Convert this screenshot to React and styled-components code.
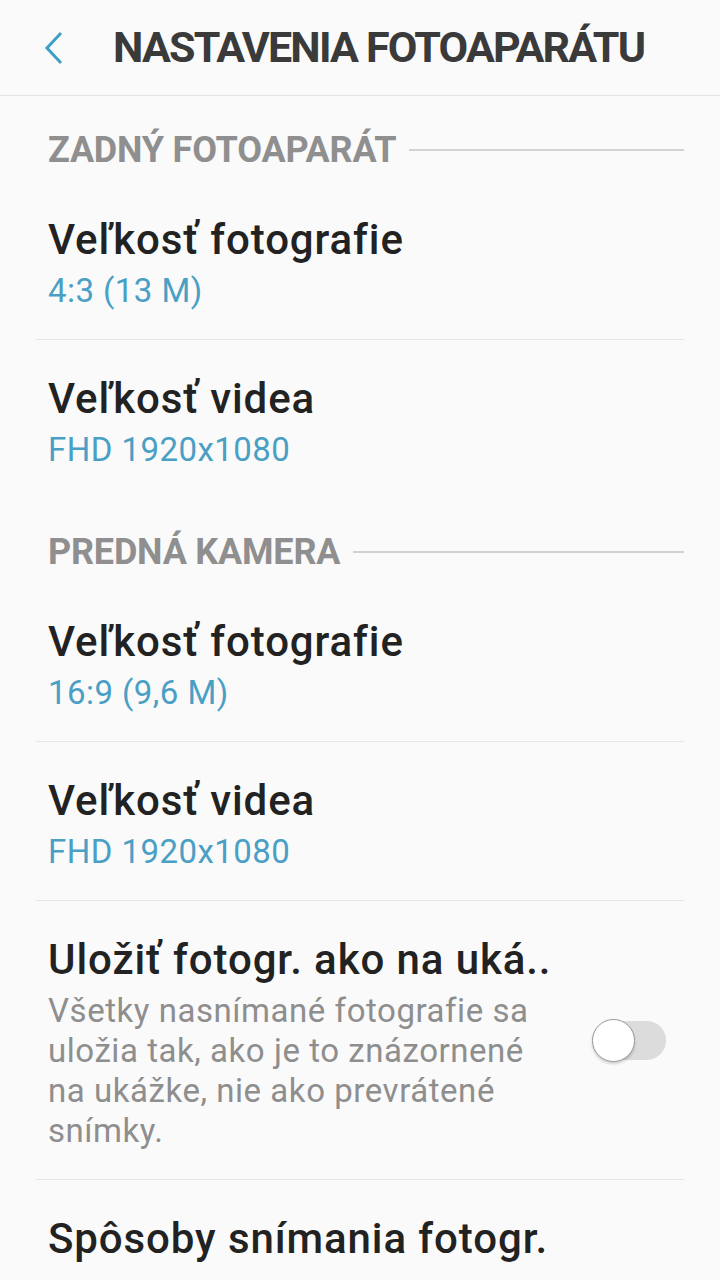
import React from "react";
import styled, { createGlobalStyle } from "styled-components";

const GlobalStyle = createGlobalStyle`
  html, body {
    margin: 0;
    padding: 0;
    background: #fafafa;
  }
  body {
    font-family: Roboto, "Noto Sans", sans-serif;
  }
`;

const Page = styled.div`
  width: 720px;
  min-height: 1280px;
  background: #fafafa;
  overflow: hidden;
`;

const Header = styled.div`
  display: flex;
  align-items: center;
  height: 95px;
  border-bottom: 1px solid #e3e3e3;
`;

const BackButton = styled.div`
  width: 113px;
  height: 95px;
  display: flex;
  align-items: center;
  padding-left: 44px;
  box-sizing: border-box;
`;

const HeaderTitle = styled.h1`
  margin: 0;
  font-size: 43px;
  font-weight: 700;
  letter-spacing: -1.8px;
  color: #3a3a3a;
  line-height: 1;
`;

const List = styled.div`
  padding: 0 36px;
`;

const SectionHeader = styled.div`
  display: flex;
  align-items: center;
  gap: 13px;
  padding: 34px 0 11px 12px;
  height: 40px;
  span {
    font-size: 36px;
    font-weight: 700;
    letter-spacing: -0.2px;
    color: #8f8f8f;
    line-height: 40px;
    white-space: nowrap;
  }
  &::after {
    content: "";
    flex: 1;
    height: 2px;
    background: #d2d2d2;
  }
`;

const Row = styled.div`
  display: flex;
  align-items: center;
  padding: 28px 18px 28px 12px;
  border-bottom: ${(p) => (p.$divider ? "1px solid #e6e6e6" : "none")};
`;

const RowText = styled.div`
  flex: 1;
  min-width: 0;
`;

const Title = styled.div`
  font-size: 42px;
  font-weight: 500;
  letter-spacing: 0.9px;
  line-height: 62px;
  color: #222;
  white-space: nowrap;
`;

const Value = styled.div`
  font-size: 33px;
  letter-spacing: 0.45px;
  line-height: 40px;
  color: #4a9fc5;
`;

const Description = styled.div`
  font-size: 33px;
  letter-spacing: 0.55px;
  line-height: 40px;
  color: #8e8e8e;
  max-width: 500px;
`;

const Track = styled.div`
  position: relative;
  width: 70px;
  height: 39px;
  border-radius: 20px;
  background: #dcdcdc;
  margin-left: 14px;
  flex-shrink: 0;
`;

const Knob = styled.div`
  position: absolute;
  left: -4px;
  top: -2px;
  width: 41px;
  height: 41px;
  border-radius: 50%;
  background: #fff;
  border: 1px solid #999;
  box-shadow: 0 2px 3px rgba(0, 0, 0, 0.18);
`;

const Chevron = () => (
  <svg width="20" height="34" viewBox="0 0 20 34">
    <polyline
      points="17,2 3,17 17,32"
      fill="none"
      stroke="#3d9fc6"
      strokeWidth="3"
    />
  </svg>
);

const SettingRow = ({ title, value, divider }) => (
  <Row $divider={divider}>
    <RowText>
      <Title>{title}</Title>
      <Value>{value}</Value>
    </RowText>
  </Row>
);

export default function App() {
  return (
    <Page>
      <GlobalStyle />
      <Header>
        <BackButton>
          <Chevron />
        </BackButton>
        <HeaderTitle>NASTAVENIA FOTOAPARÁTU</HeaderTitle>
      </Header>
      <List>
        <SectionHeader>
          <span>ZADNÝ FOTOAPARÁT</span>
        </SectionHeader>
        <SettingRow title="Veľkosť fotografie" value="4:3 (13 M)" divider />
        <SettingRow title="Veľkosť videa" value="FHD 1920x1080" />
        <SectionHeader>
          <span>PREDNÁ KAMERA</span>
        </SectionHeader>
        <SettingRow title="Veľkosť fotografie" value="16:9 (9,6 M)" divider />
        <SettingRow title="Veľkosť videa" value="FHD 1920x1080" divider />
        <Row $divider>
          <RowText>
            <Title>Uložiť fotogr. ako na uká..</Title>
            <Description>
              Všetky nasnímané fotografie sa uložia tak, ako je to znázornené
              na ukážke, nie ako prevrátené snímky.
            </Description>
          </RowText>
          <Track>
            <Knob />
          </Track>
        </Row>
        <Row>
          <RowText>
            <Title>Spôsoby snímania fotogr.</Title>
          </RowText>
        </Row>
      </List>
    </Page>
  );
}
